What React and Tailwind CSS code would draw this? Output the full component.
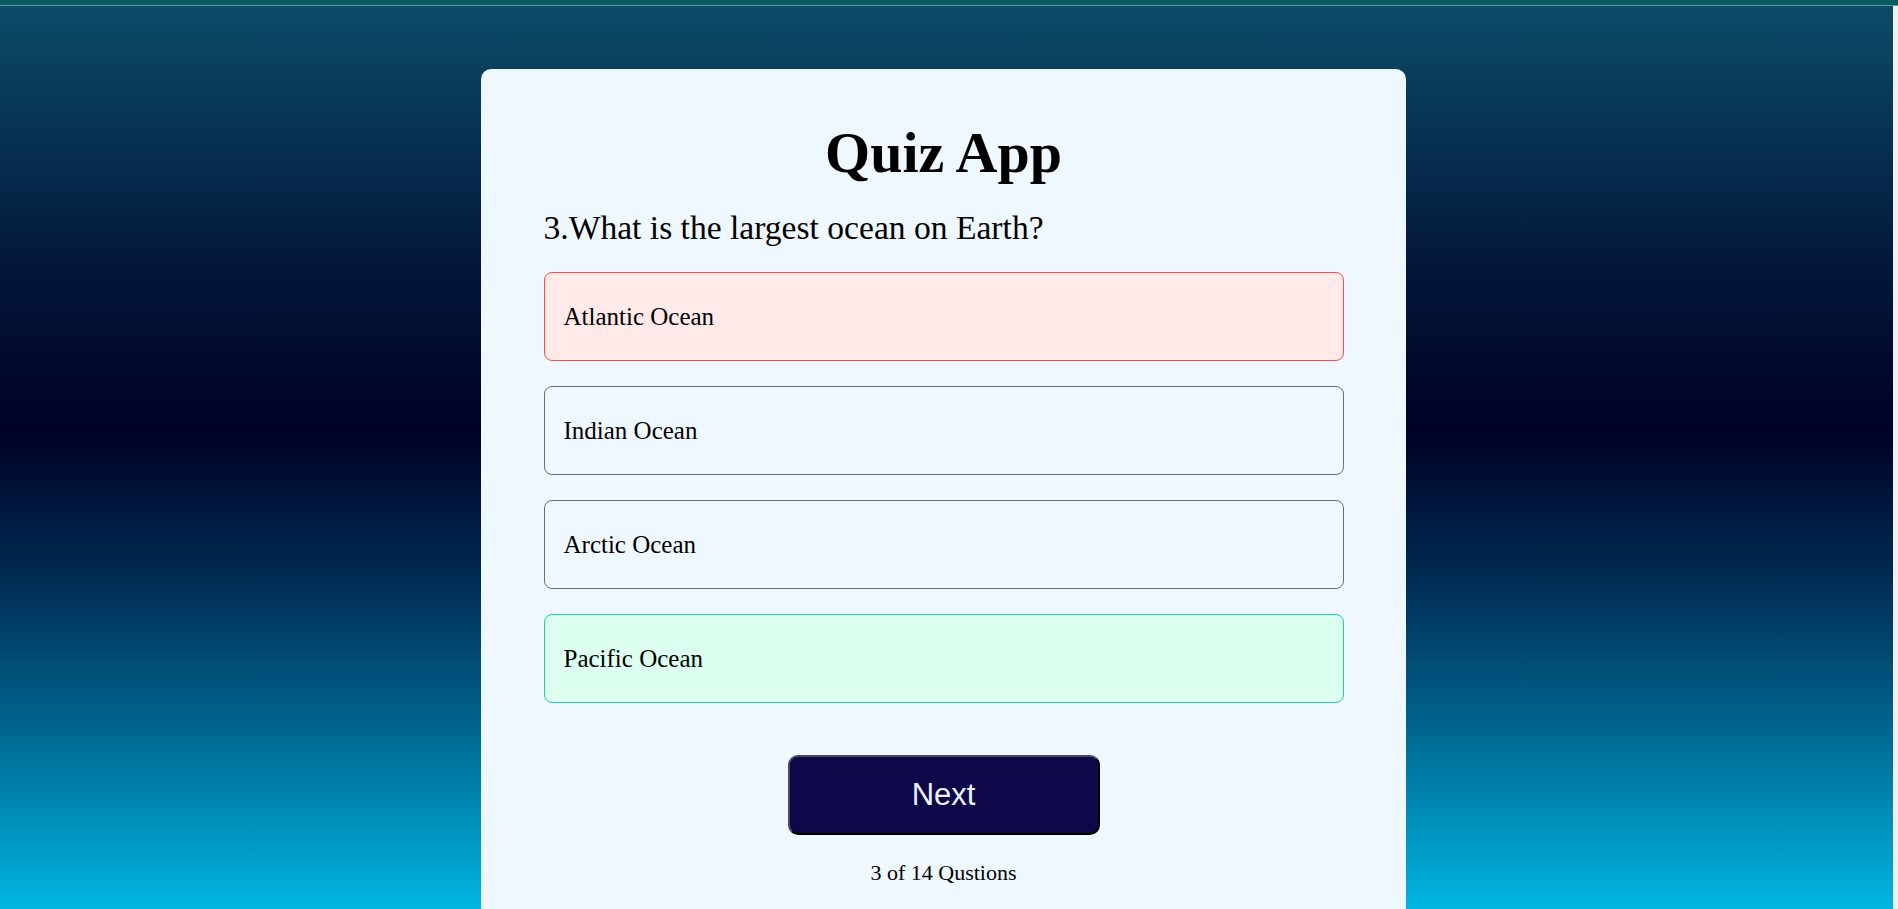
import React, { useState } from "react";

const questions = [
  { q: "What is the largest ocean on Earth?", options: ["Atlantic Ocean", "Indian Ocean", "Arctic Ocean", "Pacific Ocean"], answer: 3 },
];

const App = () => {
  const [picked] = useState(0);
  const current = questions[0];

  const optionClass = (i) => {
    if (i === current.answer) return "border-[#1fd49a] bg-[#dcfff0]";
    if (i === picked) return "border-[#ff4a4a] bg-[#ffe9e9]";
    return "border-[#6e6e6e]";
  };

  return (
    <div className="h-[909px] flex flex-col overflow-hidden font-['Liberation_Serif',serif]">
      <div className="h-[5px] bg-[#075b5f]" />
      <div className="h-px bg-[#4f9ea1]" />
      <div className="flex flex-1 min-h-0">
        <div className="flex-1 flex justify-center pr-[7px] pt-[63px] bg-[linear-gradient(to_bottom,#0b4c68_0%,#03183c_28%,#000125_47%,#002a52_63%,#00668f_80%,#00b6e2_100%)]">
          <div className="w-[925px] bg-[#f0f8ff] rounded-t-[10px] pl-[63px] pr-[62px] pt-[51px]">
            <h1 className="text-center text-[58px] leading-[66px] font-bold text-black">Quiz App</h1>
            <h2 className="mt-[22px] text-[33.6px] leading-[40px] text-black">3.{current.q}</h2>
            <ul className="mt-[24px] flex flex-col gap-[25px]">
              {current.options.map((opt, i) => (
                <li
                  key={opt}
                  className={`h-[89px] flex items-center pl-[19px] border rounded-lg text-[25px] text-black ${optionClass(i)}`}
                >
                  {opt}
                </li>
              ))}
            </ul>
            <div className="flex justify-center mt-[52px]">
              <button className="w-[312px] h-[80px] rounded-[10px] border-2 border-[#4a4a55] border-r-black border-b-black bg-[#0c084a] text-[#eef2ff] text-[31px] font-['Liberation_Sans',sans-serif]">
                Next
              </button>
            </div>
            <p className="mt-[25px] text-center text-[22px] leading-[26px] text-black">3 of 14 Qustions</p>
          </div>
        </div>
        <div className="w-[5px] bg-[#f0f0f0]" />
      </div>
    </div>
  );
};

export default App;
